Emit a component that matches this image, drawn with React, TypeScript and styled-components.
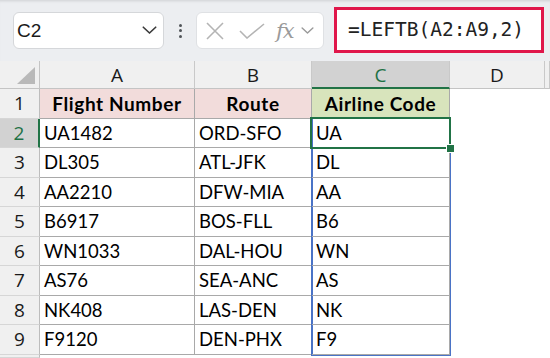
import React from "react";
import styled, { createGlobalStyle } from "styled-components";

const GlobalStyle = createGlobalStyle`
  html, body { margin: 0; padding: 0; background: #ffffff; }
  body { width: 550px; height: 358px; overflow: hidden; }
`;

const Page = styled.div`
  width: 550px;
  height: 358px;
  display: flex;
  flex-direction: column;
  overflow: hidden;
  background: #ffffff;
`;

const Toolbar = styled.div`
  height: 61px;
  flex: none;
  display: flex;
  align-items: center;
  padding-left: 13px;
  box-sizing: border-box;
  background: #eceef1;
  box-shadow: inset 0 3px 3px -2px rgba(0, 0, 0, 0.12);
`;

const NameBox = styled.div`
  width: 151px;
  height: 37px;
  box-sizing: border-box;
  background: #ffffff;
  border: 1px solid #d5d7da;
  border-radius: 6px;
  display: flex;
  align-items: center;
  justify-content: space-between;
  padding: 0 6px 0 3px;
  font-family: "Liberation Sans", Arial, sans-serif;
  font-size: 19px;
  color: #1a1a1a;
`;

const Dots = styled.div`
  width: 32px;
  display: flex;
  flex-direction: column;
  align-items: center;
  gap: 2.5px;
  span {
    width: 3px;
    height: 3px;
    border-radius: 50%;
    background: #505458;
  }
`;

const FuncBox = styled.div`
  width: 128px;
  height: 37px;
  box-sizing: border-box;
  background: #ffffff;
  border: 1px solid #dfe1e4;
  border-radius: 6px;
  display: flex;
  align-items: center;
  padding-left: 8px;
`;

const FxLabel = styled.span`
  font-family: "DejaVu Serif", "Liberation Serif", serif;
  font-style: italic;
  font-size: 21px;
  color: #9a9a9a;
  margin-left: 11px;
  letter-spacing: -1px;
`;

const FormulaBox = styled.div`
  margin-left: 10px;
  width: 210px;
  height: 46px;
  margin-top: -2px;
  box-sizing: border-box;
  background: #ffffff;
  border: 3px solid #e0174b;
  display: flex;
  align-items: center;
  padding-left: 11px;
  font-family: "DejaVu Sans Mono", "Liberation Mono", monospace;
  font-size: 19.5px;
  color: #222222;
`;

const Sheet = styled.div`
  flex: 1;
  display: grid;
  grid-template-columns: 40px 155px 117px 138px 95px 1fr;
  grid-template-rows: 28px repeat(9, 29.5px) 1fr;
  font-family: Lato, "Open Sans", sans-serif;
`;

const Corner = styled.div`
  background: #f0f0f0;
  border-right: 1px solid #c4c4c4;
  border-bottom: 1px solid #c4c4c4;
  box-sizing: border-box;
  display: flex;
  align-items: flex-end;
  justify-content: flex-end;
  padding: 0 4px 4px 0;
`;

const Triangle = styled.div`
  width: 0;
  height: 0;
  border-left: 18px solid transparent;
  border-bottom: 17px solid #b9b9b9;
`;

const ColHead = styled.div<{ $sel?: boolean }>`
  box-sizing: border-box;
  background: ${(p) => (p.$sel ? "#d2d2d2" : "#f0f0f0")};
  border-right: 1px solid #c9c9c9;
  border-bottom: ${(p) => (p.$sel ? "2px solid #217346" : "1px solid #c4c4c4")};
  display: flex;
  align-items: center;
  justify-content: center;
  font-family: "Open Sans", sans-serif;
  font-size: 19px;
  color: ${(p) => (p.$sel ? "#1e7145" : "#1a1a1a")};
  padding-top: ${(p) => (p.$sel ? "1px" : "0")};
`;

const RowHead = styled.div<{ $sel?: boolean }>`
  box-sizing: border-box;
  background: ${(p) => (p.$sel ? "#d2d2d2" : "#f0f0f0")};
  border-right: ${(p) => (p.$sel ? "2px solid #217346" : "1px solid #bdbdbd")};
  border-bottom: 1px solid #d6d6d6;
  display: flex;
  align-items: center;
  justify-content: center;
  font-family: "Open Sans", sans-serif;
  font-size: 19px;
  color: ${(p) => (p.$sel ? "#1e7145" : "#1a1a1a")};
`;

const Cell = styled.div<{
  $fill?: string;
  $head?: boolean;
  $range?: "mid" | "last";
  $active?: boolean;
}>`
  box-sizing: border-box;
  position: relative;
  background: ${(p) => p.$fill || "#ffffff"};
  border-right: 1px solid #a9a9a9;
  border-bottom: 1px solid #a9a9a9;
  display: flex;
  align-items: center;
  justify-content: ${(p) => (p.$head ? "center" : "flex-start")};
  padding-left: ${(p) => (p.$head ? "0" : "4px")};
  font-size: ${(p) => (p.$head ? "19px" : "18.5px")};
  letter-spacing: ${(p) => (p.$head ? "0.6px" : "0")};
  font-weight: ${(p) => (p.$head ? 700 : 400)};
  color: #000000;
  white-space: nowrap;
  box-shadow: ${(p) =>
    p.$range === "last"
      ? "inset 1px 0 #4a73c6, 1px 0 #4a73c6, 1px 1px #4a73c6, 0 1px #4a73c6, -1px 1px #4a73c6, -1px 0 #4a73c6"
      : p.$range === "mid"
      ? "inset 1px 0 #4a73c6, 1px 0 #4a73c6, -1px 0 #4a73c6"
      : "none"};
  z-index: ${(p) => (p.$active ? 3 : p.$range ? 1 : 0)};
`;

const Blank = styled.div``;

const ActiveOutline = styled.div`
  position: absolute;
  left: -2px;
  top: -2px;
  right: -2px;
  bottom: -2px;
  border: 2px solid #217346;
  pointer-events: none;
`;

const FillHandle = styled.div`
  position: absolute;
  right: -6px;
  bottom: -6px;
  width: 7px;
  height: 7px;
  background: #217346;
  border: 1px solid #ffffff;
`;

const Chevron = ({ color, size }: { color: string; size: number }) => (
  <svg width={size} height={size * 0.55} viewBox="0 0 14 8" fill="none">
    <path d="M1 1.2 L7 6.8 L13 1.2" stroke={color} strokeWidth="1.6" strokeLinecap="round" strokeLinejoin="round" />
  </svg>
);

const CancelIcon = () => (
  <svg width="20" height="18" viewBox="0 0 20 18" fill="none">
    <path d="M2 1 L18 17 M18 1 L2 17" stroke="#b4b4b4" strokeWidth="1.6" />
  </svg>
);

const EnterIcon = () => (
  <svg width="26" height="16" viewBox="0 0 26 16" fill="none">
    <path d="M1 8 L8 15 L25 1" stroke="#b4b4b4" strokeWidth="1.6" />
  </svg>
);

const IconSlot = styled.span<{ $ml?: number }>`
  display: flex;
  align-items: center;
  margin-left: ${(p) => p.$ml || 0}px;
`;

const data: [string, string, string][] = [
  ["UA1482", "ORD-SFO", "UA"],
  ["DL305", "ATL-JFK", "DL"],
  ["AA2210", "DFW-MIA", "AA"],
  ["B6917", "BOS-FLL", "B6"],
  ["WN1033", "DAL-HOU", "WN"],
  ["AS76", "SEA-ANC", "AS"],
  ["NK408", "LAS-DEN", "NK"],
  ["F9120", "DEN-PHX", "F9"],
];

export default function App() {
  return (
    <Page>
      <GlobalStyle />
      <Toolbar>
        <NameBox>
          <span>C2</span>
          <Chevron color="#3a3a3a" size={15} />
        </NameBox>
        <Dots>
          <span />
          <span />
          <span />
        </Dots>
        <FuncBox>
          <CancelIcon />
          <IconSlot $ml={14}>
            <EnterIcon />
          </IconSlot>
          <FxLabel>fx</FxLabel>
          <IconSlot $ml={7}>
            <Chevron color="#9a9a9a" size={13} />
          </IconSlot>
        </FuncBox>
        <FormulaBox>=LEFTB(A2:A9,2)</FormulaBox>
      </Toolbar>
      <Sheet>
        <Corner>
          <Triangle />
        </Corner>
        <ColHead>A</ColHead>
        <ColHead>B</ColHead>
        <ColHead $sel>C</ColHead>
        <ColHead>D</ColHead>
        <ColHead />

        <RowHead>1</RowHead>
        <Cell $head $fill="#f2dcdb">Flight Number</Cell>
        <Cell $head $fill="#f2dcdb">Route</Cell>
        <Cell $head $fill="#d8e4bc">Airline Code</Cell>
        <Blank />
        <Blank />

        {data.map((r, i) => (
          <React.Fragment key={i}>
            <RowHead $sel={i === 0}>{i + 2}</RowHead>
            <Cell>{r[0]}</Cell>
            <Cell>{r[1]}</Cell>
            <Cell $range={i === data.length - 1 ? "last" : "mid"} $active={i === 0}>
              {r[2]}
              {i === 0 && (
                <ActiveOutline>
                  <FillHandle />
                </ActiveOutline>
              )}
            </Cell>
            <Blank />
            <Blank />
          </React.Fragment>
        ))}
        <RowHead />
      </Sheet>
    </Page>
  );
}
